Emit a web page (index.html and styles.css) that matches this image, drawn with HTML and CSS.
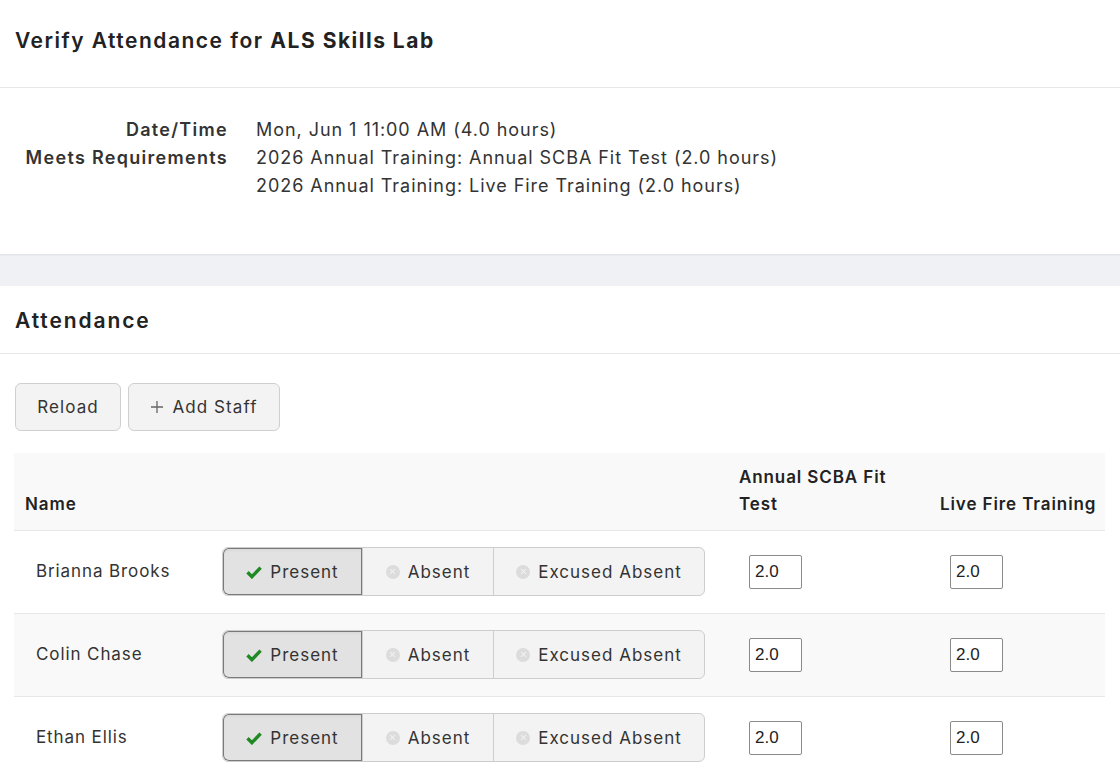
FILE: index.html
```html
<!DOCTYPE html>
<html lang="en">
<head>
<meta charset="utf-8">
<title>Verify Attendance</title>
<link rel="stylesheet" href="styles.css">
</head>
<body>
<section class="card card-top">
  <header class="card-head">
    <h1 class="title">Verify Attendance for <strong>ALS Skills Lab</strong></h1>
  </header>
  <div class="details">
    <dl class="info">
      <dt>Date/Time</dt>
      <dd>Mon, Jun 1 11:00 AM (4.0 hours)</dd>
      <dt>Meets Requirements</dt>
      <dd>2026 Annual Training: Annual SCBA Fit Test (2.0 hours)<br>2026 Annual Training: Live Fire Training (2.0 hours)</dd>
    </dl>
  </div>
</section>
<div class="band"></div>
<section class="card card-att">
  <header class="card-head att-head">
    <h2 class="subtitle">Attendance</h2>
  </header>
  <div class="att-body">
    <div class="toolbar">
      <button class="btn btn-reload" type="button">Reload</button>
      <button class="btn btn-add" type="button"><svg class="plus" viewBox="0 0 14 14" width="14" height="14"><path d="M7 1v12M1 7h12" stroke="#666" stroke-width="1.3" fill="none"/></svg>Add Staff</button>
    </div>
    <table class="grid">
      <colgroup>
        <col class="c-name"><col class="c-status"><col class="c-req1"><col class="c-req2">
      </colgroup>
      <thead>
        <tr>
          <th>Name</th>
          <th></th>
          <th class="th-req1">Annual SCBA Fit Test</th>
          <th class="th-req2">Live Fire Training</th>
        </tr>
      </thead>
      <tbody>
        <tr>
          <td class="name">Brianna Brooks</td>
          <td><div class="seg">
            <button class="seg-btn seg-present active" type="button"><svg class="check" viewBox="0 0 16 14" width="16" height="14"><path d="M1.5 7.3l4.4 4.4L14.6 2.6" stroke="#1f8a24" stroke-width="3.4" fill="none"/></svg>Present</button>
            <button class="seg-btn seg-absent" type="button"><span class="xdot"></span>Absent</button>
            <button class="seg-btn seg-excused" type="button"><span class="xdot"></span>Excused Absent</button>
          </div></td>
          <td><input class="hrs" type="text" value="2.0"></td>
          <td><input class="hrs" type="text" value="2.0"></td>
        </tr>
        <tr class="alt">
          <td class="name">Colin Chase</td>
          <td><div class="seg">
            <button class="seg-btn seg-present active" type="button"><svg class="check" viewBox="0 0 16 14" width="16" height="14"><path d="M1.5 7.3l4.4 4.4L14.6 2.6" stroke="#1f8a24" stroke-width="3.4" fill="none"/></svg>Present</button>
            <button class="seg-btn seg-absent" type="button"><span class="xdot"></span>Absent</button>
            <button class="seg-btn seg-excused" type="button"><span class="xdot"></span>Excused Absent</button>
          </div></td>
          <td><input class="hrs" type="text" value="2.0"></td>
          <td><input class="hrs" type="text" value="2.0"></td>
        </tr>
        <tr>
          <td class="name">Ethan Ellis</td>
          <td><div class="seg">
            <button class="seg-btn seg-present active" type="button"><svg class="check" viewBox="0 0 16 14" width="16" height="14"><path d="M1.5 7.3l4.4 4.4L14.6 2.6" stroke="#1f8a24" stroke-width="3.4" fill="none"/></svg>Present</button>
            <button class="seg-btn seg-absent" type="button"><span class="xdot"></span>Absent</button>
            <button class="seg-btn seg-excused" type="button"><span class="xdot"></span>Excused Absent</button>
          </div></td>
          <td><input class="hrs" type="text" value="2.0"></td>
          <td><input class="hrs" type="text" value="2.0"></td>
        </tr>
      </tbody>
    </table>
  </div>
</section>
</body>
</html>
```
FILE: styles.css
```css
* { box-sizing: border-box; }
html, body { margin: 0; padding: 0; }
body {
  font-family: Inter, "Noto Sans", "Liberation Sans", sans-serif;
  color: #333;
  background: #fff;
  font-size: 17px;
  letter-spacing: 0.9px;
}
.card { background: #fff; }
.card-top { box-shadow: 0 1px 2px rgba(0,0,0,0.08); position: relative; }
.card-head {
  border-bottom: 1px solid #e8e8e8;
  padding: 0 15px;
}
.card-top .card-head { height: 88px; display: flex; align-items: center; padding-bottom: 7px; }
.title {
  margin: 0;
  font-size: 21px;
  font-weight: 600;
  color: #222;
  letter-spacing: 1.5px;
}
.title strong { font-weight: 700; }
.details { padding: 28px 15px 54px; }
.info {
  display: grid;
  grid-template-columns: 213px auto;
  column-gap: 28px;
  margin: 0;
  line-height: 28px;
  font-size: 18px;
  letter-spacing: 0.95px;
}
.info dt { text-align: right; font-weight: 600; color: #333; letter-spacing: 1.3px; }
.info dd { margin: 0; color: #333; }
.band { height: 32px; background: #f0f1f4; }
.att-head { height: 68px; display: flex; align-items: center; padding-top: 2px; }
.subtitle { margin: 0; font-size: 21px; font-weight: 600; color: #222; letter-spacing: 1.9px; }
.att-body { padding: 29px 15px 0 14px; }
.toolbar { display: flex; gap: 7px; margin-bottom: 22px; padding-left: 1px; }
.btn {
  font-family: inherit;
  font-size: 17px;
  letter-spacing: 1.1px;
  color: #333;
  height: 48px;
  padding: 0;
  background: #f3f3f3;
  border: 1px solid #cfcfcf;
  border-radius: 6px;
  display: inline-flex;
  align-items: center;
  justify-content: center;
  gap: 8px;
}
.btn-reload { width: 106px; }
.btn-add { width: 152px; }
.plus { display: block; }
.grid {
  width: 1091px;
  border-collapse: collapse;
  table-layout: fixed;
}
.c-name { width: 187px; }
.c-status { width: 527px; }
.c-req1 { width: 201px; }
.c-req2 { width: 176px; }
.grid thead tr { background: #f9f9f9; height: 77px; }
.grid th {
  text-align: left;
  vertical-align: bottom;
  font-weight: 600;
  font-size: 17px;
  line-height: 27px;
  color: #222;
  padding: 0 11px 12px;
  border-bottom: 1px solid #e8e8e8;
}
.grid th.th-req1 { padding-right: 30px; }
.grid th.th-req2 { padding-right: 0; white-space: nowrap; }
.grid tbody tr { height: 83px; border-bottom: 1px solid #e8e8e8; }
.grid tbody tr:last-child { border-bottom: none; }
.grid tbody tr.alt { background: #f9f9f9; }
.grid td { padding: 0 21px; vertical-align: middle; }
.grid td.name { padding-left: 22px; color: #333; padding-bottom: 2px; }
.seg {
  display: inline-flex;
  height: 49px;
  border: 1px solid #cdcdcd;
  border-radius: 6px;
  background: #f3f3f3;
  overflow: hidden;
}
.seg-btn {
  font-family: inherit;
  font-size: 17px;
  letter-spacing: 1px;
  color: #333;
  background: transparent;
  border: none;
  border-left: 1px solid #cdcdcd;
  display: inline-flex;
  align-items: center;
  justify-content: center;
  gap: 8px;
  padding: 0;
}
.seg-btn:first-child { border-left: none; }
.seg-present { width: 139px; }
.seg-absent { width: 131px; }
.seg-excused { width: 211px; }
.seg-btn.active {
  background: #e2e2e2;
  box-shadow: inset 0 0 0 1px #7a7a7a, inset 0 2px 3px rgba(0,0,0,0.06);
  border-radius: 6px 0 0 6px;
}
.check { display: block; }
.xdot {
  width: 14px; height: 14px;
  border-radius: 50%;
  background: #dcdcdc;
  position: relative;
  display: inline-block;
}
.xdot::before, .xdot::after {
  content: "";
  position: absolute;
  left: 3.5px; top: 6.4px;
  width: 7px; height: 1.3px;
  background: #f3f3f3;
  transform: rotate(45deg);
}
.xdot::after { transform: rotate(-45deg); }
.hrs {
  width: 53px;
  height: 34px;
  font-family: "Liberation Sans", Arial, sans-serif;
  font-size: 17px;
  letter-spacing: 0;
  color: #222;
  border: 1px solid #8a8a8a;
  border-radius: 2px;
  padding: 0 5px;
  background: #fff;
}
```
